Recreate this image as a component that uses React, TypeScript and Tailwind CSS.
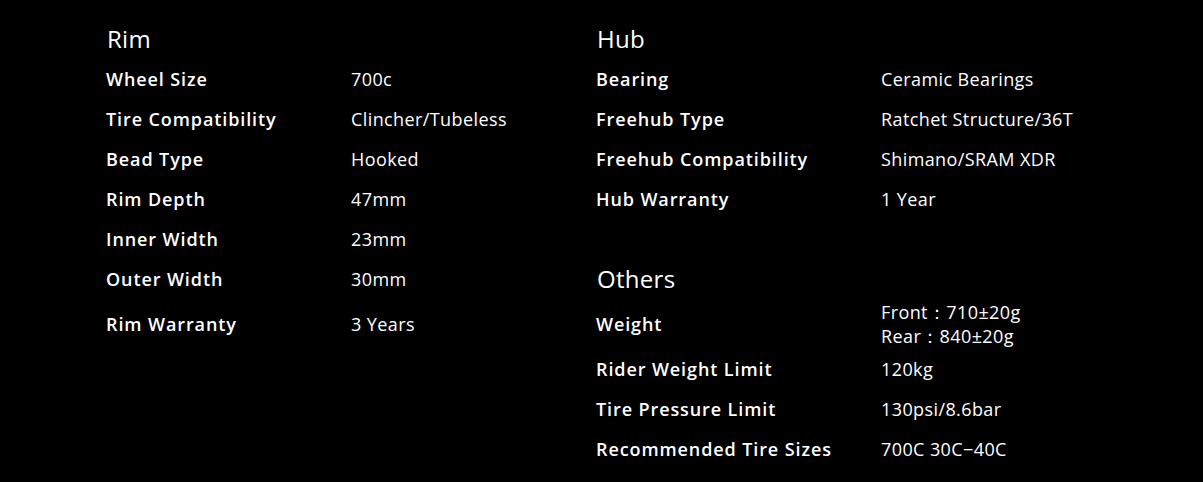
import React from "react";

type Row = { l1?: string; v1?: string; l2?: string; v2?: React.ReactNode; h1?: string; h2?: string; tall?: boolean };

const rows: Row[] = [
  { h1: "Rim", h2: "Hub" },
  { l1: "Wheel Size", v1: "700c", l2: "Bearing", v2: "Ceramic Bearings" },
  { l1: "Tire Compatibility", v1: "Clincher/Tubeless", l2: "Freehub Type", v2: "Ratchet Structure/36T" },
  { l1: "Bead Type", v1: "Hooked", l2: "Freehub Compatibility", v2: "Shimano/SRAM XDR" },
  { l1: "Rim Depth", v1: "47mm", l2: "Hub Warranty", v2: "1 Year" },
  { l1: "Inner Width", v1: "23mm" },
  { l1: "Outer Width", v1: "30mm", h2: "Others" },
  {
    l1: "Rim Warranty",
    v1: "3 Years",
    l2: "Weight",
    v2: (
      <>
        <div>Front：710±20g</div>
        <div>Rear：840±20g</div>
      </>
    ),
    tall: true,
  },
  { l2: "Rider Weight Limit", v2: "120kg" },
  { l2: "Tire Pressure Limit", v2: "130psi/8.6bar" },
  { l2: "Recommended Tire Sizes", v2: "700C 30C−40C" },
];

export default function App() {
  return (
    <div
      className="w-[1203px] h-[482px] bg-black text-white overflow-hidden"
      style={{ fontFamily: "'Open Sans', Lato, sans-serif" }}
    >
      <div className="pl-[106px] pt-[19px] grid grid-cols-[245px_245px_285px_1fr]">
        {rows.map((r, i) => {
          const h = r.tall ? "h-[50px]" : "h-[40px]";
          const cell = `${h} flex flex-col justify-center whitespace-nowrap`;
          return (
            <React.Fragment key={i}>
              <div className={cell}>
                {r.h1 ? (
                  <span className="text-[24px] leading-none pl-[1px] tracking-[0.3px]">{r.h1}</span>
                ) : (
                  <span className="text-[18px] font-semibold tracking-[0.9px] leading-6">{r.l1}</span>
                )}
              </div>
              <div className={cell}>
                <span className="text-[18px] leading-6 tracking-[0.4px]">{r.v1}</span>
              </div>
              <div className={cell}>
                {r.h2 ? (
                  <span className="text-[24px] leading-none pl-[1px] tracking-[0.3px]">{r.h2}</span>
                ) : (
                  <span className="text-[18px] font-semibold tracking-[0.9px] leading-6">{r.l2}</span>
                )}
              </div>
              <div className={cell}>
                <div className="text-[18px] leading-6 tracking-[0.4px]">{r.v2}</div>
              </div>
            </React.Fragment>
          );
        })}
      </div>
    </div>
  );
}
